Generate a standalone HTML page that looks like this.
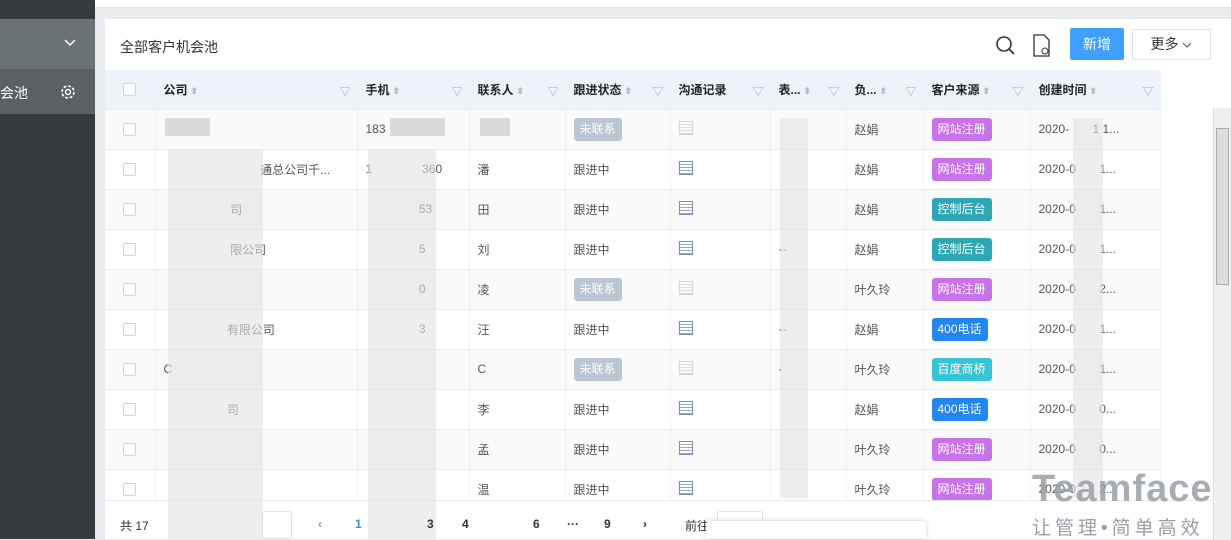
<!DOCTYPE html><html><head><meta charset="utf-8"><style>
*{box-sizing:border-box;margin:0;padding:0}
body{width:1231px;height:539px;overflow:hidden;background:#e9ebee;font-family:"Liberation Sans","Noto Sans CJK SC",sans-serif;font-size:12px;color:#333;position:relative}
.side{position:absolute;left:0;top:0;width:95px;height:539px;background:#353b3e}
.abs{position:absolute}
.card{position:absolute;left:105px;top:19px;width:1126px;height:520px;background:#fff}
table{border-collapse:collapse;position:absolute;left:105px;top:70px;table-layout:fixed;width:1055px}
td,th{height:40px;border-bottom:1px solid #e8ecf2;border-right:1px solid #eef0f4;padding:0 0 0 8px;text-align:left;white-space:nowrap;overflow:hidden;font-size:12px;color:#555;font-weight:normal}
th{height:39px;background:#eef3fa;color:#222;font-weight:bold;position:relative}
tr:nth-child(even) td{background:#fafafa}
.cb{width:13px;height:13px;border:1px solid #cfd4da;border-radius:2px;background:#fff;margin-left:10px}
.tag{display:inline-block;height:23px;line-height:23px;padding:0 6px;border-radius:3px;color:#fff;font-size:12px}
.p{background:#c774e8}.t{background:#2ea7b5}.b{background:#2186ee}.c{background:#36c5d5}.g{background:#b8c7d3}
.blur{position:absolute;background:#e2e2e2;opacity:.6}
.ic{display:inline-block;width:14px;height:14px;border:1px solid #7f8fa8;background:repeating-linear-gradient(#fff 0 2px,#9aa8bd 2px 3px)}
.ic.l{opacity:.35}
.f{position:absolute;right:6px;top:13px;color:#aaa;font-size:11px}
.s{color:#bbb;font-size:9px;margin-left:3px}
.pg{position:absolute;top:517px;font-size:12px;color:#333;font-weight:bold}
</style></head><body>
<div class="side"></div>
<div class="abs" style="left:0;top:19px;width:95px;height:50px;background:#6b7275"></div>
<svg class="abs" style="left:63px;top:38px" width="14" height="10"><path d="M2 2l5 5 5-5" fill="none" stroke="#fff" stroke-width="1.5"/></svg>
<div class="abs" style="left:0;top:69px;width:95px;height:45px;background:#5a6063"></div>
<div class="abs" style="left:0;top:83px;color:#fff;font-size:14px">会池</div>
<svg class="abs" style="left:59px;top:83px" width="18" height="18"><circle cx="9" cy="9" r="6" fill="none" stroke="#fff" stroke-width="1.6" stroke-dasharray="3 1.7"/><circle cx="9" cy="9" r="2.5" fill="none" stroke="#fff" stroke-width="1.4"/></svg>
<div class="abs" style="left:95px;top:0;width:1136px;height:8px;background:#fff;border-bottom:1px solid #ddd"></div>
<div class="card"></div>
<div class="abs" style="left:120px;top:37px;font-size:14px;color:#333">全部客户机会池</div>
<svg class="abs" style="left:995px;top:35px" width="22" height="22"><circle cx="9" cy="9" r="7" fill="none" stroke="#333" stroke-width="1.6"/><line x1="14" y1="14" x2="19" y2="19" stroke="#333" stroke-width="1.8"/></svg>
<svg class="abs" style="left:1032px;top:34px" width="20" height="24"><path d="M2 1h10l5 5v16H2z" fill="none" stroke="#333" stroke-width="1.3"/><circle cx="13" cy="17" r="3" fill="none" stroke="#333"/></svg>
<div class="abs" style="left:1070px;top:28px;width:54px;height:32px;background:#40a0ff;border-radius:2px;color:#fff;font-size:14px;line-height:32px;text-align:center">新增</div>
<div class="abs" style="left:1132px;top:29px;width:79px;height:31px;border:1px solid #dcdfe6;border-radius:2px;font-size:14px;line-height:29px;text-align:center">更多 <svg width="10" height="8"><path d="M1 2l4 4 4-4" fill="none" stroke="#555"/></svg></div>
<div class="abs" style="left:1213px;top:108px;width:18px;height:431px;background:#f0f0f0;border-left:1px solid #ddd"></div>
<div class="abs" style="left:1216px;top:128px;width:13px;height:157px;background:#dcdcdc;border:1px solid #aaa"></div>
<table>
<colgroup><col style="width:50px"><col style="width:202px"><col style="width:112px"><col style="width:96px"><col style="width:105px"><col style="width:100px"><col style="width:76px"><col style="width:77px"><col style="width:107px"><col style="width:130px"></colgroup>
<tr><th><div class="cb"></div></th><th>公司<span class="s">⬍</span><span class="f">▽</span></th><th>手机<span class="s">⬍</span><span class="f">▽</span></th><th>联系人<span class="s">⬍</span><span class="f">▽</span></th><th>跟进状态<span class="s">⬍</span><span class="f">▽</span></th><th>沟通记录<span class="f">▽</span></th><th>表...<span class="s">⬍</span><span class="f">▽</span></th><th>负...<span class="s">⬍</span><span class="f">▽</span></th><th>客户来源<span class="s">⬍</span><span class="f">▽</span></th><th>创建时间<span class="s">⬍</span><span class="f">▽</span></th></tr>
<tr><td><div class="cb"></div></td><td></td><td>183</td><td></td><td><span class="tag g">未联系</span></td><td><span class="ic l"></span></td><td></td><td>赵娟</td><td><span class="tag p">网站注册</span></td><td>2020-&nbsp;&nbsp;&nbsp;&nbsp;&nbsp;&nbsp;&nbsp;1 1...</td></tr>
<tr><td><div class="cb"></div></td><td>&nbsp;&nbsp;&nbsp;&nbsp;&nbsp;&nbsp;&nbsp;&nbsp;&nbsp;&nbsp;&nbsp;&nbsp;&nbsp;&nbsp;&nbsp;&nbsp;&nbsp;&nbsp;&nbsp;&nbsp;&nbsp;&nbsp;&nbsp;&nbsp;&nbsp;&nbsp;&nbsp;&nbsp;&nbsp;通总公司千...</td><td>1&nbsp;&nbsp;&nbsp;&nbsp;&nbsp;&nbsp;&nbsp;&nbsp;&nbsp;&nbsp;&nbsp;&nbsp;&nbsp;&nbsp;&nbsp;360</td><td>潘</td><td>跟进中</td><td><span class="ic"></span></td><td></td><td>赵娟</td><td><span class="tag p">网站注册</span></td><td>2020-0&nbsp;&nbsp;&nbsp;&nbsp;&nbsp;&nbsp;&nbsp;1...</td></tr>
<tr><td><div class="cb"></div></td><td>&nbsp;&nbsp;&nbsp;&nbsp;&nbsp;&nbsp;&nbsp;&nbsp;&nbsp;&nbsp;&nbsp;&nbsp;&nbsp;&nbsp;&nbsp;&nbsp;&nbsp;&nbsp;&nbsp;&nbsp;司</td><td>&nbsp;&nbsp;&nbsp;&nbsp;&nbsp;&nbsp;&nbsp;&nbsp;&nbsp;&nbsp;&nbsp;&nbsp;&nbsp;&nbsp;&nbsp;&nbsp;53</td><td>田</td><td>跟进中</td><td><span class="ic"></span></td><td></td><td>赵娟</td><td><span class="tag t">控制后台</span></td><td>2020-0&nbsp;&nbsp;&nbsp;&nbsp;&nbsp;&nbsp;&nbsp;1...</td></tr>
<tr><td><div class="cb"></div></td><td>&nbsp;&nbsp;&nbsp;&nbsp;&nbsp;&nbsp;&nbsp;&nbsp;&nbsp;&nbsp;&nbsp;&nbsp;&nbsp;&nbsp;&nbsp;&nbsp;&nbsp;&nbsp;&nbsp;&nbsp;限公司</td><td>&nbsp;&nbsp;&nbsp;&nbsp;&nbsp;&nbsp;&nbsp;&nbsp;&nbsp;&nbsp;&nbsp;&nbsp;&nbsp;&nbsp;&nbsp;&nbsp;5</td><td>刘</td><td>跟进中</td><td><span class="ic"></span></td><td>--</td><td>赵娟</td><td><span class="tag t">控制后台</span></td><td>2020-0&nbsp;&nbsp;&nbsp;&nbsp;&nbsp;&nbsp;&nbsp;1...</td></tr>
<tr><td><div class="cb"></div></td><td></td><td>&nbsp;&nbsp;&nbsp;&nbsp;&nbsp;&nbsp;&nbsp;&nbsp;&nbsp;&nbsp;&nbsp;&nbsp;&nbsp;&nbsp;&nbsp;&nbsp;0</td><td>凌</td><td><span class="tag g">未联系</span></td><td><span class="ic l"></span></td><td></td><td>叶久玲</td><td><span class="tag p">网站注册</span></td><td>2020-0&nbsp;&nbsp;&nbsp;&nbsp;&nbsp;&nbsp;&nbsp;2...</td></tr>
<tr><td><div class="cb"></div></td><td>&nbsp;&nbsp;&nbsp;&nbsp;&nbsp;&nbsp;&nbsp;&nbsp;&nbsp;&nbsp;&nbsp;&nbsp;&nbsp;&nbsp;&nbsp;&nbsp;&nbsp;&nbsp;&nbsp;有限公司</td><td>&nbsp;&nbsp;&nbsp;&nbsp;&nbsp;&nbsp;&nbsp;&nbsp;&nbsp;&nbsp;&nbsp;&nbsp;&nbsp;&nbsp;&nbsp;&nbsp;3</td><td>汪</td><td>跟进中</td><td><span class="ic"></span></td><td>--</td><td>赵娟</td><td><span class="tag b">400电话</span></td><td>2020-0&nbsp;&nbsp;&nbsp;&nbsp;&nbsp;&nbsp;&nbsp;1...</td></tr>
<tr><td><div class="cb"></div></td><td>C</td><td></td><td>C</td><td><span class="tag g">未联系</span></td><td><span class="ic l"></span></td><td>-</td><td>叶久玲</td><td><span class="tag c">百度商桥</span></td><td>2020-0&nbsp;&nbsp;&nbsp;&nbsp;&nbsp;&nbsp;&nbsp;1...</td></tr>
<tr><td><div class="cb"></div></td><td>&nbsp;&nbsp;&nbsp;&nbsp;&nbsp;&nbsp;&nbsp;&nbsp;&nbsp;&nbsp;&nbsp;&nbsp;&nbsp;&nbsp;&nbsp;&nbsp;&nbsp;&nbsp;&nbsp;司</td><td></td><td>李</td><td>跟进中</td><td><span class="ic"></span></td><td></td><td>赵娟</td><td><span class="tag b">400电话</span></td><td>2020-0&nbsp;&nbsp;&nbsp;&nbsp;&nbsp;&nbsp;&nbsp;0...</td></tr>
<tr><td><div class="cb"></div></td><td></td><td></td><td>孟</td><td>跟进中</td><td><span class="ic"></span></td><td></td><td>叶久玲</td><td><span class="tag p">网站注册</span></td><td>2020-0&nbsp;&nbsp;&nbsp;&nbsp;&nbsp;&nbsp;&nbsp;0...</td></tr>
<tr><td><div class="cb"></div></td><td></td><td></td><td>温</td><td>跟进中</td><td><span class="ic"></span></td><td></td><td>叶久玲</td><td><span class="tag p">网站注册</span></td><td>2020-0&nbsp;&nbsp;&nbsp;&nbsp;&nbsp;&nbsp;&nbsp;2...</td></tr>
</table>
<div class="abs" style="left:105px;top:500px;width:1108px;height:39px;background:#fff;border-top:1px solid #e8ecf2"></div>
<div class="blur" style="left:165px;top:118px;width:45px;height:18px;opacity:.9;background:#d6d6d6"></div>
<div class="blur" style="left:168px;top:150px;width:95px;height:389px"></div>
<div class="blur" style="left:390px;top:118px;width:55px;height:18px;opacity:.9;background:#d6d6d6"></div>
<div class="blur" style="left:368px;top:150px;width:68px;height:389px"></div>
<div class="blur" style="left:480px;top:118px;width:30px;height:18px;opacity:.9;background:#d6d6d6"></div>
<div class="blur" style="left:780px;top:118px;width:28px;height:380px"></div>
<div class="blur" style="left:1073px;top:118px;width:30px;height:380px"></div>
<div class="pg" style="left:120px;font-weight:normal">共 17</div>
<div class="abs" style="left:262px;top:511px;width:30px;height:28px;border:1px solid #dcdfe6;border-radius:3px"></div>
<div class="pg" style="left:318px;color:#999">‹</div>
<div class="pg" style="left:355px;color:#2d8cf0">1</div>
<div class="pg" style="left:427px">3</div>
<div class="pg" style="left:462px">4</div>
<div class="pg" style="left:533px">6</div>
<div class="pg" style="left:567px">···</div>
<div class="pg" style="left:604px">9</div>
<div class="pg" style="left:643px">›</div>
<div class="pg" style="left:685px;font-weight:normal">前往</div>
<div class="abs" style="left:717px;top:511px;width:46px;height:28px;border:1px solid #dcdfe6;border-radius:3px;background:#fff"></div>
<div class="abs" style="left:706px;top:521px;width:220px;height:18px;background:#fff;box-shadow:0 0 6px rgba(0,0,0,.2);border-radius:4px"></div>
<div class="abs" style="left:1032px;top:468px;font-size:38px;font-weight:bold;color:#9a9ea6;opacity:.85;letter-spacing:1px">Teamface</div>
<div class="abs" style="left:1032px;top:513px;font-size:19px;color:#9a9ea6;letter-spacing:4px">让管理•简单高效</div>
</body></html>
